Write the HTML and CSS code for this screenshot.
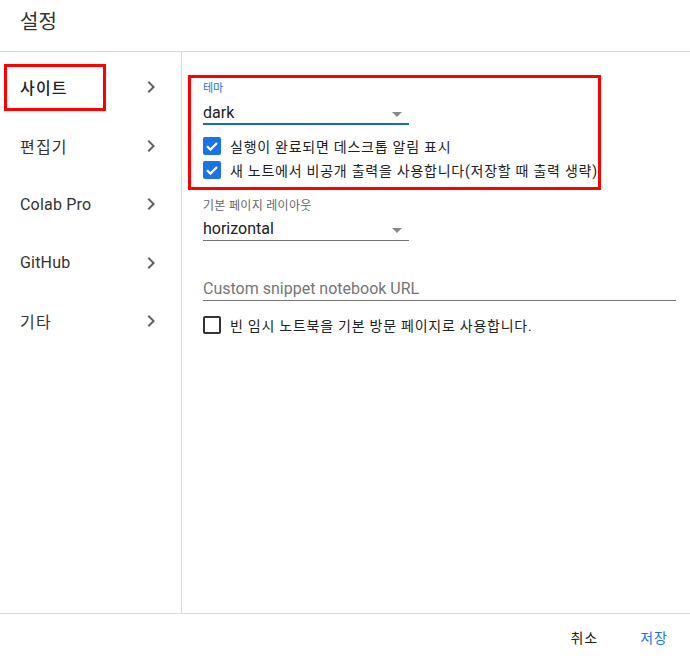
FILE: index.html
```html
<!DOCTYPE html>
<html lang="ko">
	<head>
		<meta charset="utf-8" />
		<title>설정</title>
		<link rel="stylesheet" href="styles.css">
	</head>
	<body>
		<div class="dialog">
			<header class="dialog-header">설정</header>
			<div class="dialog-body">
				<nav class="sidebar">
					<div class="nav-item">
						<span class="nav-label marked">사이트</span>
						<svg class="chevron" viewBox="0 0 24 24"><path d="M10 6L8.59 7.41 13.17 12l-4.58 4.59L10 18l6-6z"/></svg>
					</div>
					<div class="nav-item">
						<span class="nav-label">편집기</span>
						<svg class="chevron" viewBox="0 0 24 24"><path d="M10 6L8.59 7.41 13.17 12l-4.58 4.59L10 18l6-6z"/></svg>
					</div>
					<div class="nav-item">
						<span class="nav-label latin">Colab Pro</span>
						<svg class="chevron" viewBox="0 0 24 24"><path d="M10 6L8.59 7.41 13.17 12l-4.58 4.59L10 18l6-6z"/></svg>
					</div>
					<div class="nav-item">
						<span class="nav-label latin">GitHub</span>
						<svg class="chevron" viewBox="0 0 24 24"><path d="M10 6L8.59 7.41 13.17 12l-4.58 4.59L10 18l6-6z"/></svg>
					</div>
					<div class="nav-item">
						<span class="nav-label">기타</span>
						<svg class="chevron" viewBox="0 0 24 24"><path d="M10 6L8.59 7.41 13.17 12l-4.58 4.59L10 18l6-6z"/></svg>
					</div>
				</nav>
				<main class="content">
					<div class="marked-group">
						<div class="field-label active">테마</div>
						<div class="select focused">
							<span>dark</span>
							<span class="arrow"></span>
						</div>
						<div class="checks">
							<label class="check-row">
								<svg class="box" viewBox="0 0 18 18"><rect width="18" height="18" rx="2" fill="#1a73e8"/><polyline points="4,9.2 7.4,12.6 14,6" fill="none" stroke="#fff" stroke-width="2.2"/></svg>
								<span>실행이 완료되면 데스크톱 알림 표시</span>
							</label>
							<label class="check-row">
								<svg class="box" viewBox="0 0 18 18"><rect width="18" height="18" rx="2" fill="#1a73e8"/><polyline points="4,9.2 7.4,12.6 14,6" fill="none" stroke="#fff" stroke-width="2.2"/></svg>
								<span>새 노트에서 비공개 출력을 사용합니다(저장할 때 출력 생략)</span>
							</label>
						</div>
					</div>
					<div class="field-label layout-label">기본 페이지 레이아웃</div>
					<div class="select">
						<span>horizontal</span>
						<span class="arrow"></span>
					</div>
					<div class="text-input">Custom snippet notebook URL</div>
					<label class="check-row empty-row">
						<span class="box empty"></span>
						<span>빈 임시 노트북을 기본 방문 페이지로 사용합니다.</span>
					</label>
				</main>
			</div>
			<footer class="dialog-footer">
				<button type="button" class="btn">취소</button>
				<button type="button" class="btn primary">저장</button>
			</footer>
		</div>
	</body>
</html>
```

FILE: styles.css
```css
:root {
	--font-family: Roboto, "Noto Sans CJK KR", sans-serif;
	--blue: #1a73e8;
	--line: #dadada;
}

body {
	margin: 0;
	padding: 0;
	width: 690px;
	height: 658px;
	overflow: hidden;
	font-family: var(--font-family);
	color: #212121;
	background-color: #fff;
}

.dialog {
	display: flex;
	flex-direction: column;
	height: 658px;
}

.dialog-header {
	height: 52px;
	box-sizing: border-box;
	padding: 10px 20px;
	font-size: 20px;
	line-height: 24px;
	color: #333;
	border-bottom: 1px solid var(--line);
}

.dialog-body {
	display: flex;
	flex-direction: row;
	flex: 1;
}

.sidebar {
	width: 181px;
	padding-top: 6px;
	border-right: 1px solid var(--line);
}

.nav-item {
	display: flex;
	align-items: center;
	height: 58.5px;
	padding: 0 18px 0 4px;
}

.nav-label {
	display: flex;
	align-items: center;
	width: 102px;
	height: 47px;
	box-sizing: border-box;
	padding-left: 13px;
	border: 3px solid transparent;
	font-size: 16px;
	letter-spacing: 1.2px;
	white-space: nowrap;
	color: #333;
}

.nav-label.latin {
	letter-spacing: 0.2px;
}

.nav-label.marked {
	border-color: #ff0000;
	font-weight: 500;
	color: #212121;
}

.chevron {
	width: 24px;
	height: 24px;
	margin-left: auto;
	fill: #5f6368;
}

.content {
	flex: 1;
	padding: 23px 0 0 6px;
}

.marked-group {
	width: 413px;
	box-sizing: border-box;
	padding: 4px 0 5px 12px;
	border: 3px solid #ff0000;
}

.field-label {
	font-size: 11px;
	line-height: 14px;
	color: #666;
}

.field-label.active {
	color: var(--blue);
}

.layout-label {
	margin: 9px 0 0 15px;
	font-size: 12px;
	letter-spacing: 0.3px;
}

.select {
	display: flex;
	align-items: center;
	width: 206px;
	box-sizing: border-box;
	padding: 7px 0 1px;
	font-size: 16px;
	line-height: 20px;
	border-bottom: 1px solid #757575;
}

.content > .select {
	margin-left: 15px;
	padding-top: 6px;
}

.select.focused {
	padding-bottom: 0;
	border-bottom: 2px solid #1967d2;
}

.arrow {
	margin: 2px 7px 0 auto;
	border-left: 5px solid transparent;
	border-right: 5px solid transparent;
	border-top: 5px solid #8a8a8a;
}

.checks {
	margin-top: 9px;
}

.check-row {
	display: flex;
	align-items: center;
	height: 24px;
	font-size: 14px;
	letter-spacing: 0.75px;
	white-space: nowrap;
}

.box {
	width: 18px;
	height: 18px;
	margin-right: 9px;
	flex-shrink: 0;
}

.box.empty {
	box-sizing: border-box;
	border: 2px solid #333;
	border-radius: 2px;
}

.text-input {
	width: 473px;
	margin: 32px 0 0 15px;
	padding: 6px 0 1px;
	font-size: 16px;
	line-height: 20px;
	color: #757575;
	border-bottom: 1px solid #757575;
}

.empty-row {
	margin: 12px 0 0 15px;
}

.dialog-footer {
	display: flex;
	justify-content: flex-end;
	align-items: center;
	height: 44px;
	padding: 0 6px 0 0;
	border-top: 1px solid var(--line);
}

.btn {
	font-family: var(--font-family);
	font-size: 14px;
	line-height: 20px;
	letter-spacing: 1px;
	padding: 6px 16px;
	margin-top: 4px;
	margin-left: 10px;
	border: none;
	background: none;
	color: #212121;
	cursor: pointer;
}

.btn.primary {
	color: var(--blue);
}
```
